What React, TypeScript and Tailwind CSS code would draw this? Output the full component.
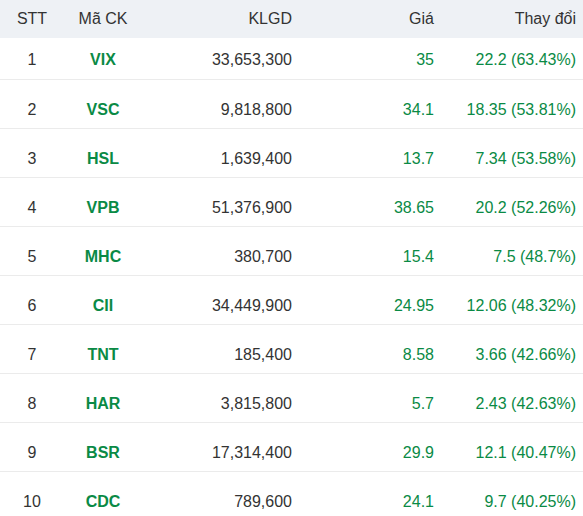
import React from 'react';

const ROWS = [
  { stt: 1, code: 'VIX', vol: '33,653,300', price: '35', change: '22.2 (63.43%)' },
  { stt: 2, code: 'VSC', vol: '9,818,800', price: '34.1', change: '18.35 (53.81%)' },
  { stt: 3, code: 'HSL', vol: '1,639,400', price: '13.7', change: '7.34 (53.58%)' },
  { stt: 4, code: 'VPB', vol: '51,376,900', price: '38.65', change: '20.2 (52.26%)' },
  { stt: 5, code: 'MHC', vol: '380,700', price: '15.4', change: '7.5 (48.7%)' },
  { stt: 6, code: 'CII', vol: '34,449,900', price: '24.95', change: '12.06 (48.32%)' },
  { stt: 7, code: 'TNT', vol: '185,400', price: '8.58', change: '3.66 (42.66%)' },
  { stt: 8, code: 'HAR', vol: '3,815,800', price: '5.7', change: '2.43 (42.63%)' },
  { stt: 9, code: 'BSR', vol: '17,314,400', price: '29.9', change: '12.1 (40.47%)' },
  { stt: 10, code: 'CDC', vol: '789,600', price: '24.1', change: '9.7 (40.25%)' },
];

export default function App() {
  return (
    <div className="w-[583px] h-[516px] overflow-hidden bg-white text-[16px] text-[#333] font-['Liberation_Sans',Arial,sans-serif]">
      <div className="flex items-center h-[38px] bg-[#eef1f5] pr-[7px]">
        <div className="w-[64px] text-center">STT</div>
        <div className="w-[78px] text-center">Mã CK</div>
        <div className="w-[150px] text-right">KLGD</div>
        <div className="w-[142px] text-right">Giá</div>
        <div className="w-[142px] text-right">Thay đổi</div>
      </div>
      {ROWS.map((row, i) => (
        <div
          key={row.stt}
          className={`flex items-center pr-[7px] border-b border-[#ebebeb] ${i === 0 ? 'h-[42px] pt-[2px]' : 'h-[49px] pt-[12px]'}`}
        >
          <div className="w-[64px] text-center">{row.stt}</div>
          <div className="w-[78px] text-center font-bold text-[#0a8a45]">{row.code}</div>
          <div className="w-[150px] text-right">{row.vol}</div>
          <div className="w-[142px] text-right text-[#0a8a45]">{row.price}</div>
          <div className="w-[142px] text-right text-[#0a8a45]">{row.change}</div>
        </div>
      ))}
    </div>
  );
}
